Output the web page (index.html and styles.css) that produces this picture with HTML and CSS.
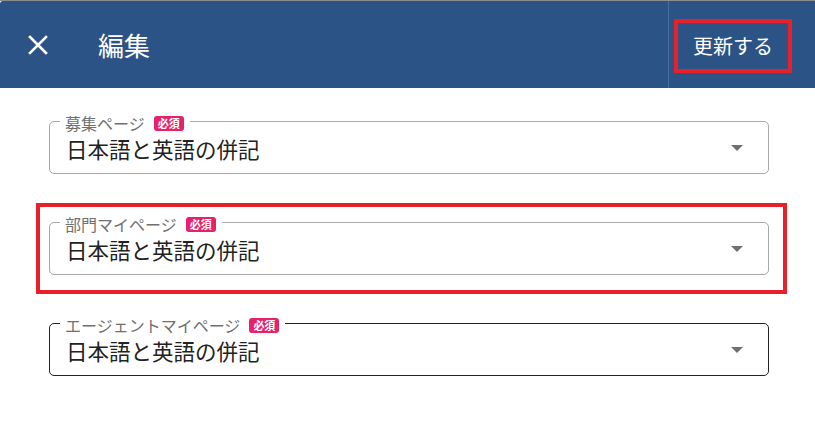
FILE: index.html
```html
<!DOCTYPE html>
<html lang="ja">
<head>
<meta charset="utf-8">
<link rel="stylesheet" href="styles.css">
</head>
<body>
<div class="app">
  <header class="header">
    <button class="close" aria-label="閉じる">
      <svg width="20" height="20" viewBox="0 0 20 20"><path d="M2 2 L18 18 M18 2 L2 18" stroke="#fff" stroke-width="2.6" stroke-linecap="square"/></svg>
    </button>
    <h1 class="title">編集</h1>
    <div class="spacer"></div>
    <div class="divider"></div>
    <div class="save-wrap"><button class="save">更新する</button></div>
  </header>
  <main class="form">
    <div class="field">
      <div class="label">募集ページ<span class="badge">必須</span></div>
      <div class="value">日本語と英語の併記</div>
      <span class="arrow"></span>
    </div>
    <div class="highlight">
      <div class="field">
        <div class="label">部門マイページ<span class="badge">必須</span></div>
        <div class="value">日本語と英語の併記</div>
        <span class="arrow"></span>
      </div>
    </div>
    <div class="field dark">
      <div class="label">エージェントマイページ<span class="badge">必須</span></div>
      <div class="value">日本語と英語の併記</div>
      <span class="arrow"></span>
    </div>
  </main>
</div>
</body>
</html>
```

FILE: styles.css
```css
* { box-sizing: border-box; }
html, body { margin: 0; padding: 0; background: #fff; }
body { font-family: "Noto Sans CJK JP", "Noto Sans", sans-serif; }
.app {
  width: 815px;
  height: 427px;
  border-top: 1px solid #8c8c8c;
  overflow: hidden;
}
.header {
  height: 87px;
  background: #2b5385;
  display: flex;
  align-items: center;
  color: #fff;
  border-top-left-radius: 3px;
}
.close {
  background: none;
  border: 0;
  padding: 0;
  margin-left: 28px;
  width: 20px;
  height: 20px;
  display: flex;
  margin-top: 1px;
}
.title {
  margin: 0 0 0 50px;
  font-size: 26px;
  font-weight: 400;
  line-height: 1;
  padding-top: 1px;
}
.spacer { flex: 1; }
.divider {
  align-self: stretch;
  width: 1px;
  background: #4670a0;
}
.save-wrap {
  padding-left: 5px;
  padding-right: 23px;
  display: flex;
  align-items: center;
}
.save {
  width: 118px;
  height: 54px;
  margin-top: 2px;
  border: 4px solid #e8202a;
  background: transparent;
  color: #fff;
  font-family: inherit;
  font-size: 20px;
  padding: 0;
  display: flex;
  align-items: center;
  justify-content: center;
}
.form {
  padding: 33px 28px 0 36px;
  display: flex;
  flex-direction: column;
  gap: 29px;
}
.form > .field { margin: 0 18px 0 13px; }
.highlight {
  border: 4px solid #e8202a;
  padding: 15px 14px 15px 9px;
}
.field {
  position: relative;
  height: 53px;
  border: 1px solid #a8a8a8;
  border-radius: 5px;
  padding: 2px 16px 0;
  display: flex;
  align-items: center;
}
.field.dark { border-color: #222; }
.label {
  position: absolute;
  top: -7px;
  left: 10px;
  background: #fff;
  padding: 0 6px 0 5px;
  height: 16px;
  display: flex;
  align-items: center;
  gap: 9px;
  font-size: 16px;
  color: #707070;
  line-height: 1;
}
.badge {
  background: #e6216a;
  color: #fff;
  font-size: 11px;
  border-radius: 3px;
  padding: 0 4px;
  height: 15px;
  display: inline-flex;
  align-items: center;
  font-weight: 700;
}
.value {
  font-size: 21.5px;
  color: #222;
  line-height: 1;
}
.arrow {
  position: absolute;
  right: 25px;
  top: 23px;
  width: 0;
  height: 0;
  border-left: 6px solid transparent;
  border-right: 6px solid transparent;
  border-top: 6px solid #707070;
}
```
